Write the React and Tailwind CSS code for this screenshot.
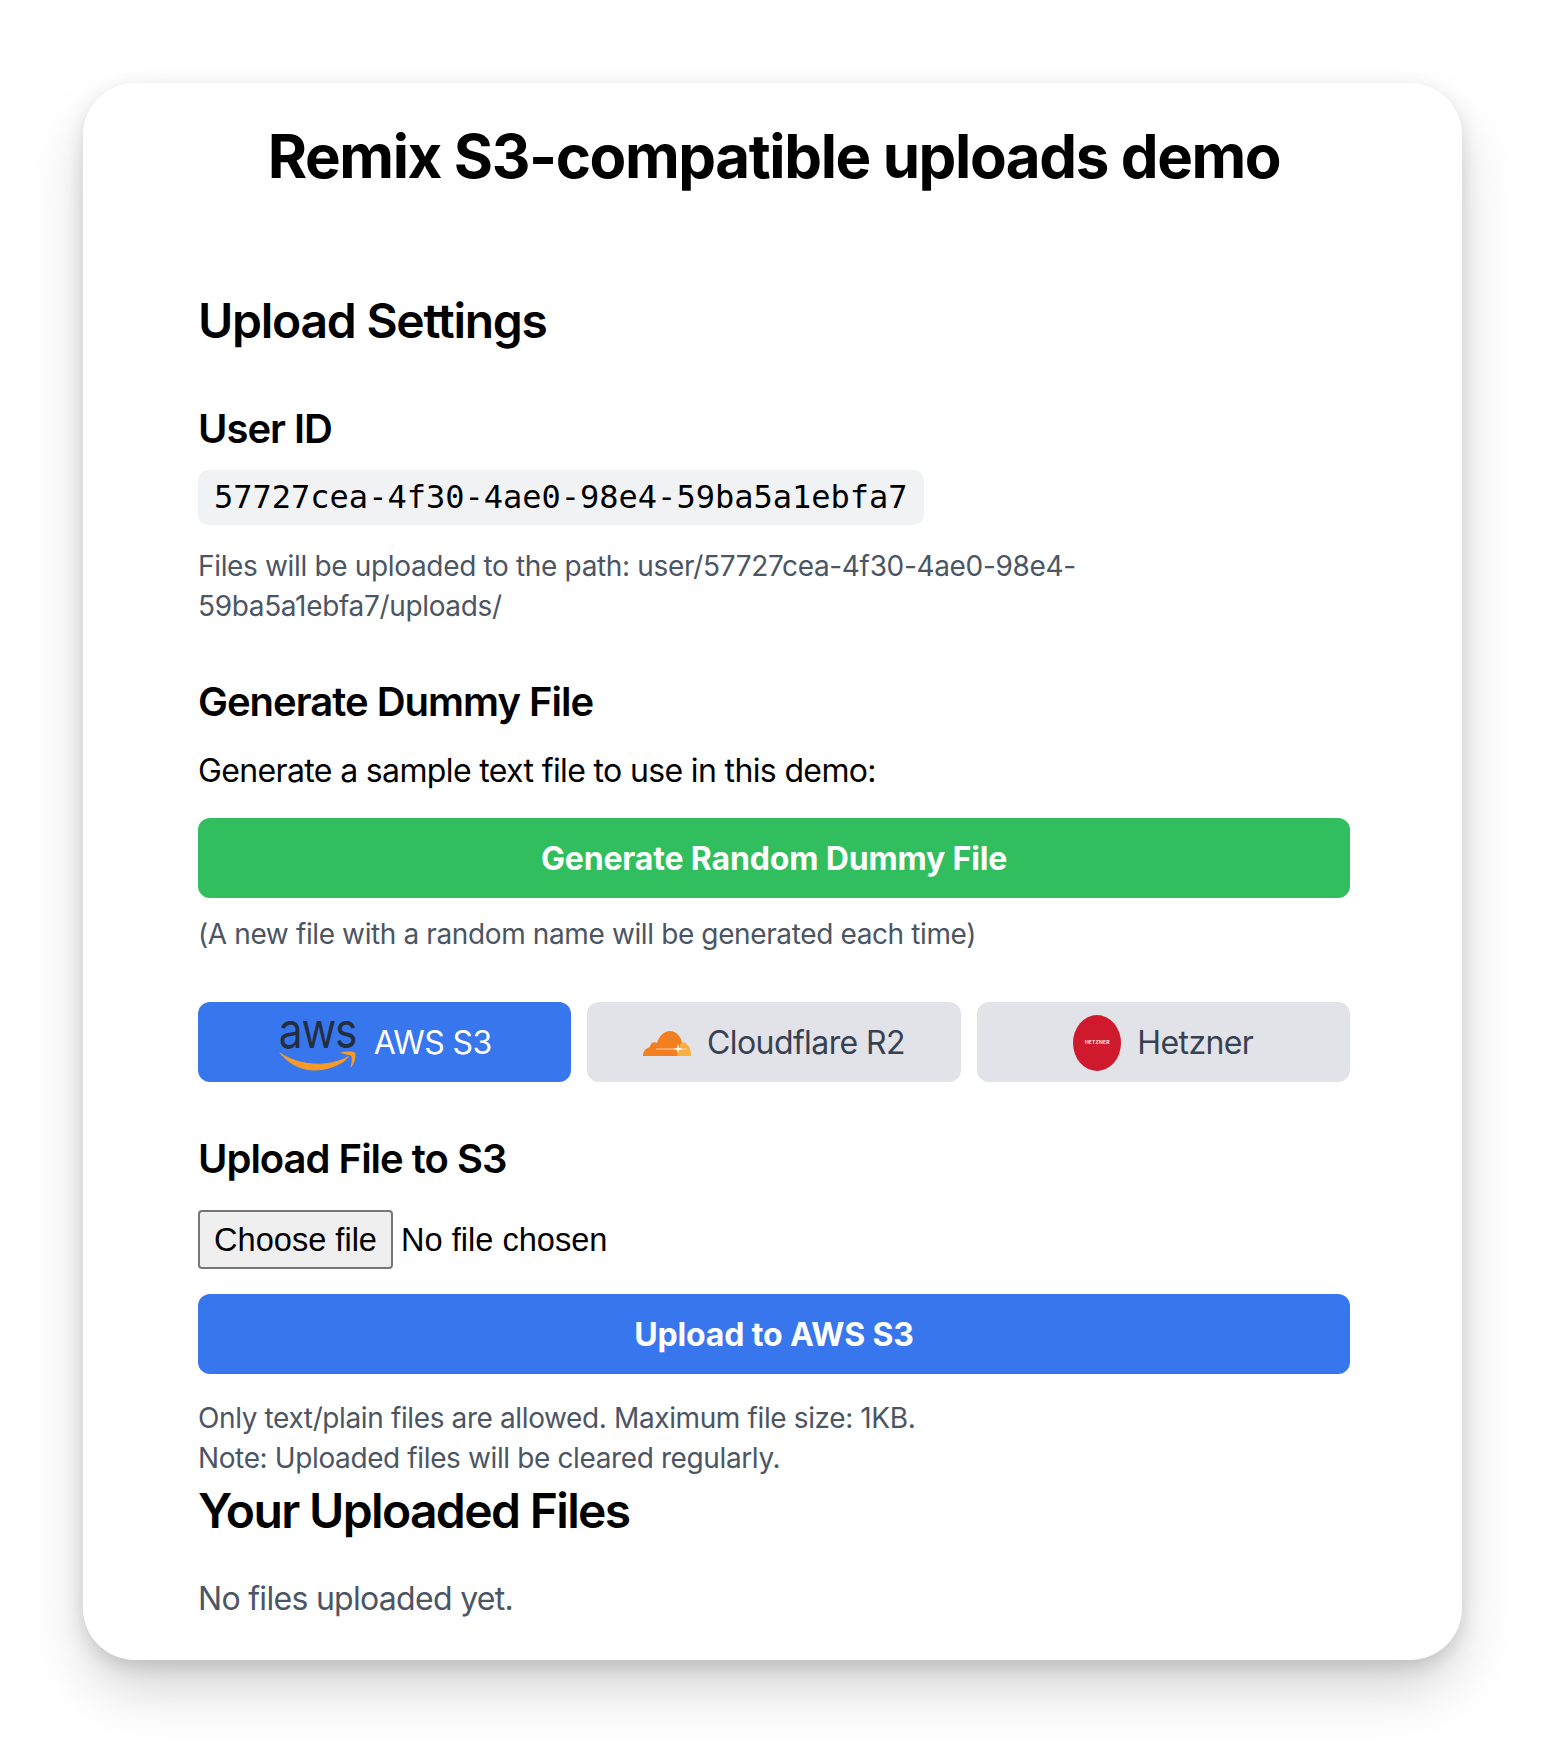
const AwsLogo = () => (
  <span className="flex flex-col items-center w-[80px] h-[56px] shrink-0">
    <span className="text-[#232f3e] text-[50px] leading-[31px] tracking-[-1.5px] font-normal scale-x-[0.85]">aws</span>
    <svg viewBox="0 0 80 22" className="w-[80px] h-[22px] mt-[4px]">
      <path d="M0 3 C20 17 50 19 72 7 C66 15 50 21 36 21 C22 21 9 14 0 3 Z" fill="#f79a26" stroke="#f79a26" strokeWidth="1" />
      <path d="M63 3 C68 1 76 1 79 3 C80 8 78 15 74 19 C75 14 76 10 75 6 C72 5 67 5 63 3 Z" fill="#f79a26" />
    </svg>
  </span>
);

const CloudflareLogo = () => (
  <svg viewBox="0 0 48 26" className="w-[48px] h-[26px] shrink-0">
    <path d="M0 26 C0 21 3 18 7 17 C7 13 11 11 14 13 C16 6 21 1 27 1 C33 1 38 6 39 13 L36 26 Z" fill="#f38020" />
    <path d="M34 26 L37 15 C39 11 43 12 44 15 C47 16 48 21 48 26 Z" fill="#faae40" />
    <path d="M13 19 H44" stroke="#f6e3d2" strokeWidth="0.8" />
    <path d="M35 14 L36 18 L40 19 L36 20 L35 24 L34 20 L30 19 L34 18 Z" fill="#ffffff" />
  </svg>
);

const HetznerLogo = () => (
  <span className="flex items-center justify-center w-[48px] h-[56px] shrink-0 rounded-[50%] bg-[#cf1a2e] text-white text-[5px] font-semibold tracking-[0.2px]">
    HETZNER
  </span>
);

const providers = [
  { name: 'AWS S3', logo: <AwsLogo />, active: true },
  { name: 'Cloudflare R2', logo: <CloudflareLogo /> },
  { name: 'Hetzner', logo: <HetznerLogo /> },
];

export default function App() {
  return (
    <div className="min-h-[1743px] bg-white px-[83px] pt-[83px] font-['Inter',sans-serif] text-black">
      <div className="h-[1577px] rounded-[52px] bg-white pl-[115px] pr-[112px] pt-[33px] shadow-[0_30px_60px_-6px_rgba(0,0,0,0.2),0_6px_18px_rgba(0,0,0,0.12)]">
        <h1 className="text-center text-[60px] leading-[80px] font-bold tracking-[-1.4px]">Remix S3-compatible uploads demo</h1>

        <h2 className="mt-[93px] text-[48px] leading-[64px] font-semibold tracking-[-1.25px]">Upload Settings</h2>

        <h3 className="mt-[48px] text-[40px] leading-[56px] font-semibold tracking-[-1px]">User ID</h3>
        <code className="mt-[13px] block w-[726px] h-[55px] rounded-[10px] bg-[#f1f2f4] px-[16px] font-['DejaVu_Sans_Mono',monospace] text-[32px] leading-[55px] whitespace-nowrap">
          57727cea-4f30-4ae0-98e4-59ba5a1ebfa7
        </code>
        <p className="mt-[21px] w-[900px] text-[28px] leading-[40px] tracking-[-0.34px] text-[#4b5563]">
          Files will be uploaded to the path: user/57727cea-4f30-4ae0-98e4-59ba5a1ebfa7/uploads/
        </p>

        <h3 className="mt-[48px] text-[40px] leading-[56px] font-semibold tracking-[-1px]">Generate Dummy File</h3>
        <p className="mt-[17px] text-[32px] leading-[48px] tracking-[-0.64px]">Generate a sample text file to use in this demo:</p>
        <button className="mt-[23px] block w-full h-[80px] pt-[2px] rounded-[12px] bg-[#30be5e] text-[32px] font-bold tracking-[-0.15px] text-white">
          Generate Random Dummy File
        </button>
        <p className="mt-[16px] text-[28px] leading-[40px] tracking-[-0.38px] text-[#4b5563]">(A new file with a random name will be generated each time)</p>

        <div className="mt-[48px] grid grid-cols-3 gap-[16px]">
          {providers.map((p) => (
            <button
              key={p.name}
              className={`flex h-[80px] pt-[1px] items-center justify-center gap-[16px] rounded-[12px] text-[32px] tracking-[-0.6px] ${p.active ? 'bg-[#3876ee] text-white' : 'bg-[#e2e3e8] text-[#374151]'}`}
            >
              {p.logo}
              {p.name}
            </button>
          ))}
        </div>

        <h3 className="mt-[49px] text-[40px] leading-[56px] font-semibold tracking-[-1px]">Upload File to S3</h3>
        <div className="mt-[23px] flex items-center gap-[8px] font-['Liberation_Sans',sans-serif] text-[32.6px]">
          <button className="h-[59px] w-[195px] pt-[1px] rounded-[4px] border-2 border-[#767676] bg-[#efefef]">Choose file</button>
          <span className="pt-[2px]">No file chosen</span>
        </div>
        <button className="mt-[25px] block w-full h-[80px] pt-[2px] rounded-[12px] bg-[#3876ee] text-[32px] font-bold tracking-[-0.15px] text-white">
          Upload to AWS S3
        </button>
        <p className="mt-[24px] text-[28px] leading-[40px] tracking-[-0.38px] text-[#4b5563]">
          Only text/plain files are allowed. Maximum file size: 1KB.
          <br />
          Note: Uploaded files will be cleared regularly.
        </p>

        <h2 className="mt-[1px] text-[48px] leading-[64px] font-semibold tracking-[-1.65px]">Your Uploaded Files</h2>
        <p className="mt-[32px] text-[32px] leading-[48px] tracking-[-0.7px] text-[#4b5563]">No files uploaded yet.</p>
      </div>
    </div>
  );
}
